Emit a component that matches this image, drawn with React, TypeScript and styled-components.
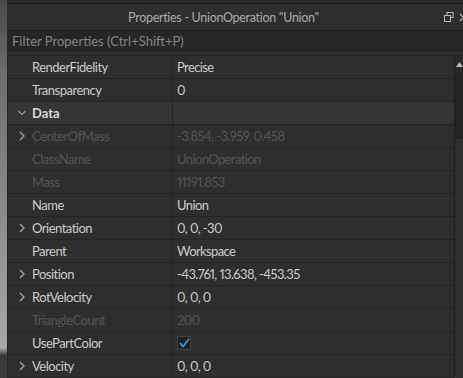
import React from "react";
import styled, { createGlobalStyle } from "styled-components";

const GlobalStyle = createGlobalStyle`
  html, body { margin: 0; padding: 0; background: #2e2e2e; }
  body { font-family: "Lato", "Noto Sans", sans-serif; }
`;

const Screen = styled.div`
  display: flex;
  width: 463px;
  height: 378px;
  overflow: hidden;
`;

const BackStrip = styled.div`
  width: 7px;
  flex: none;
  background: linear-gradient(180deg, #4a4a4a 0%, #6e6e6e 20%, #8e8e8e 60%, #a8a8a8 92%, #3a3a3a 94%, #3a3a3a 100%);
`;

const Window = styled.div`
  flex: 1;
  display: flex;
  flex-direction: column;
  min-width: 0;
  background: #2e2e2e;
`;

const TopEdge = styled.div`
  height: 3px;
  background: #2a2a2a;
  border-bottom: 1px solid #1d1d1d;
  flex: none;
`;

const TitleBar = styled.div`
  height: 26px;
  display: flex;
  align-items: center;
  flex: none;
  background: #2e2e2e;
`;

const Title = styled.div`
  flex: 1;
  text-align: center;
  font-size: 12.5px;
  letter-spacing: -0.3px;
  color: #ababab;
  white-space: nowrap;
`;

const TitleIcons = styled.div`
  width: 35px;
  display: flex;
  align-items: center;
  gap: 5px;
  padding-left: 4px;
  box-sizing: border-box;
  margin-right: -12px;
`;

const FilterBox = styled.div`
  height: 19px;
  flex: none;
  display: flex;
  align-items: center;
  padding-left: 5px;
  background: #262626;
  border-top: 1px solid #1c1c1c;
  border-bottom: 1px solid #1c1c1c;
  font-size: 13px;
  color: #858585;
  white-space: nowrap;
`;

const Spacer = styled.div`
  height: 4px;
  flex: none;
`;

const Body = styled.div`
  flex: 1;
  display: flex;
  min-height: 0;
  border-top: 1px solid #222;
`;

const List = styled.div`
  flex: 1;
  display: flex;
  flex-direction: column;
  border-left: 1px solid #232323;
`;

const Row = styled.div<{ $category?: boolean }>`
  display: grid;
  grid-template-columns: 165px 1fr;
  height: 22px;
  flex: none;
  border-bottom: 1px solid #232323;
  background: ${(p) => (p.$category ? "#353535" : "#2e2e2e")};
`;

const NameCell = styled.div`
  display: flex;
  align-items: center;
  border-right: 1px solid #232323;
  min-width: 0;
`;

const Toggle = styled.div`
  width: 24px;
  flex: none;
  display: flex;
  align-items: center;
  justify-content: center;
  padding-left: 4px;
  box-sizing: border-box;
`;

const Label = styled.span<{ $disabled?: boolean; $bold?: boolean }>`
  font-size: 13px;
  letter-spacing: ${(p) => (p.$bold ? "0" : "-0.5px")};
  font-variant-numeric: proportional-nums;
  font-weight: ${(p) => (p.$bold ? 700 : 400)};
  color: ${(p) => (p.$disabled ? "#555555" : p.$bold ? "#d8d8d8" : "#cccccc")};
  white-space: nowrap;
`;

const Value = styled(Label)`
  letter-spacing: -0.6px;
`;

const ValueCell = styled.div`
  display: flex;
  align-items: center;
  padding-left: 4px;
  min-width: 0;
`;

const CheckBox = styled.div`
  width: 14px;
  height: 14px;
  box-sizing: border-box;
  background: #1f1f1f;
  border: 1px solid #444;
  display: flex;
  align-items: center;
  justify-content: center;
`;

const Scrollbar = styled.div`
  width: 8px;
  flex: none;
  display: flex;
  flex-direction: column;
  background: #232323;
  border-left: 1px solid #1e1e1e;
`;

const ScrollArrow = styled.div`
  height: 16px;
  display: flex;
  align-items: center;
  justify-content: center;
  background: #2a2a2a;
  border-bottom: 1px solid #1e1e1e;
`;

const ScrollTrack = styled.div`
  height: 66px;
`;

const ScrollThumb = styled.div`
  flex: 1;
  background: #2f2f2f;
`;

const Chevron = ({ open }: { open?: boolean }) => (
  <svg width="8" height="10" viewBox="0 0 8 10">
    {open ? (
      <polyline points="0.5,3 4,6.5 7.5,3" fill="none" stroke="#9a9a9a" strokeWidth="1.2" />
    ) : (
      <polyline points="2,1 6,5 2,9" fill="none" stroke="#a8a8a8" strokeWidth="1.3" />
    )}
  </svg>
);

type Prop = {
  name: string;
  value?: string;
  expandable?: boolean;
  disabled?: boolean;
  category?: boolean;
  check?: boolean;
};

const props: Prop[] = [
  { name: "RenderFidelity", value: "Precise" },
  { name: "Transparency", value: "0" },
  { name: "Data", category: true },
  { name: "CenterOfMass", value: "-3.854, -3.959, 0.458", expandable: true, disabled: true },
  { name: "ClassName", value: "UnionOperation", disabled: true },
  { name: "Mass", value: "11191.853", disabled: true },
  { name: "Name", value: "Union" },
  { name: "Orientation", value: "0, 0, -30", expandable: true },
  { name: "Parent", value: "Workspace" },
  { name: "Position", value: "-43.761, 13.638, -453.35", expandable: true },
  { name: "RotVelocity", value: "0, 0, 0", expandable: true },
  { name: "TriangleCount", value: "200", disabled: true },
  { name: "UsePartColor", check: true },
  { name: "Velocity", value: "0, 0, 0", expandable: true },
];

export default function App() {
  return (
    <>
      <GlobalStyle />
      <Screen>
        <BackStrip />
        <Window>
          <TopEdge />
          <TitleBar>
            <Title>Properties - UnionOperation "Union"</Title>
            <TitleIcons>
              <svg width="10" height="10" viewBox="0 0 10 10">
                <rect x="3" y="0.5" width="6" height="5" fill="none" stroke="#bdbdbd" strokeWidth="1" />
                <rect x="0.5" y="3.5" width="6" height="6" fill="#2e2e2e" stroke="#bdbdbd" strokeWidth="1" />
              </svg>
              <svg width="9" height="9" viewBox="0 0 9 9">
                <path d="M1 1 L8 8 M8 1 L1 8" stroke="#bdbdbd" strokeWidth="1.2" />
              </svg>
            </TitleIcons>
          </TitleBar>
          <FilterBox>Filter Properties (Ctrl+Shift+P)</FilterBox>
          <Spacer />
          <Body>
            <List>
              {props.map((p) => (
                <Row key={p.name} $category={p.category}>
                  <NameCell>
                    <Toggle>
                      {p.category ? <Chevron open /> : p.expandable ? <Chevron /> : null}
                    </Toggle>
                    <Label $disabled={p.disabled} $bold={p.category}>
                      {p.name}
                    </Label>
                  </NameCell>
                  <ValueCell>
                    {p.check ? (
                      <CheckBox>
                        <svg width="11" height="10" viewBox="0 0 11 10">
                          <polyline points="1,5 4,8.5 10,1" fill="none" stroke="#3ba0f5" strokeWidth="1.6" />
                        </svg>
                      </CheckBox>
                    ) : p.value !== undefined ? (
                      <Value $disabled={p.disabled}>{p.value}</Value>
                    ) : null}
                  </ValueCell>
                </Row>
              ))}
            </List>
            <Scrollbar>
              <ScrollArrow>
                <svg width="7" height="5" viewBox="0 0 7 5">
                  <polygon points="0,5 7,5 3.5,0" fill="#bdbdbd" />
                </svg>
              </ScrollArrow>
              <ScrollTrack />
              <ScrollThumb />
            </Scrollbar>
          </Body>
        </Window>
      </Screen>
    </>
  );
}
